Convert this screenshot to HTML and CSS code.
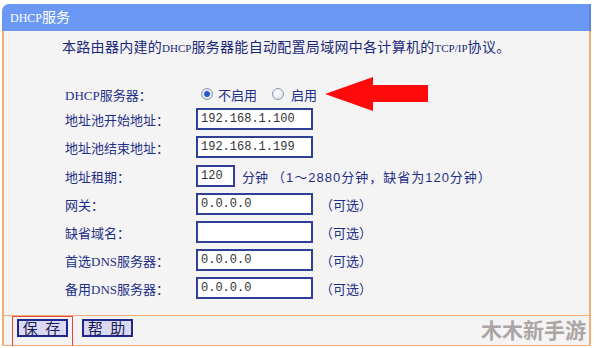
FILE: index.html
```html
<!DOCTYPE html>
<html lang="zh-CN">
<head>
    <meta charset="UTF-8">
    <meta name="viewport" content="width=device-width, initial-scale=1.0">
    <title>DHCP服务</title>
    <link rel="stylesheet" href="styles.css">
</head>
<body>
    <div class="panel">
        <div class="panel-head"><span class="en">DHCP</span>服务</div>

        <div class="panel-body">
            <p class="intro">本路由器内建的<span class="en">DHCP</span>服务器能自动配置局域网中各计算机的<span class="en">TCP/IP</span>协议。</p>

            <div class="form">
                <div class="row row-radio">
                    <span class="label"><span class="en">DHCP</span>服务器：</span>
                    <label class="opt"><input type="radio" name="dhcp" checked>不启用</label>
                    <label class="opt"><input type="radio" name="dhcp">启用</label>
                </div>
                <div class="row">
                    <span class="label">地址池开始地址：</span>
                    <input class="text" type="text" value="192.168.1.100">
                </div>
                <div class="row">
                    <span class="label">地址池结束地址：</span>
                    <input class="text" type="text" value="192.168.1.199">
                </div>
                <div class="row row-lease">
                    <span class="label">地址租期：</span>
                    <input class="text short" type="text" value="120">
                    <span class="unit">分钟</span>
                    <span class="hint">（1～2880分钟，缺省为120分钟）</span>
                </div>
                <div class="row">
                    <span class="label">网关：</span>
                    <input class="text" type="text" value="0.0.0.0">
                    <span class="note">（可选）</span>
                </div>
                <div class="row">
                    <span class="label">缺省域名：</span>
                    <input class="text" type="text" value="">
                    <span class="note">（可选）</span>
                </div>
                <div class="row">
                    <span class="label">首选<span class="en">DNS</span>服务器：</span>
                    <input class="text" type="text" value="0.0.0.0">
                    <span class="note">（可选）</span>
                </div>
                <div class="row">
                    <span class="label">备用<span class="en">DNS</span>服务器：</span>
                    <input class="text" type="text" value="0.0.0.0">
                    <span class="note">（可选）</span>
                </div>
            </div>

            <!-- red pointer at the radio buttons -->
            <svg class="arrow" width="103" height="34" viewBox="0 0 103 34">
                <polygon points="0,17 48,0 48,8 103,8 103,25 48,25 48,34" fill="#ff0a0a"/>
            </svg>
        </div>

        <div class="panel-foot">
            <div class="mark-box"><button class="btn">保 存</button></div>
            <button class="btn">帮 助</button>
            <span class="watermark">木木新手游</span>
        </div>
    </div>
</body>
</html>
```

FILE: styles.css
```css
body {
    margin: 0;
    padding: 0;
    background: #ffffff;
    font-family: "Liberation Serif", "Noto Sans CJK SC", serif;
    color: #1f2f88;
}

.panel {
    margin: 4px 3px 0 2px;
}

.panel-head {
    height: 27px;
    line-height: 27px;
    padding-left: 8px;
    background: #6a98f4;
    border-top-left-radius: 7px;
    border-right: 2px solid #5a86e4;
    color: #ffffff;
    font-size: 14px;
}

.panel-head .en {
    font-size: 12px;
}

.panel-body {
    position: relative;
    height: 284px;
    box-sizing: border-box;
    background: #f4f4f4;
    border-left: 2px solid #f2ae74;
    border-right: 2px solid #f2ae74;
    padding-top: 8px;
}

.intro {
    margin: 0 0 0 58px;
    height: 18px;
    line-height: 18px;
    font-size: 14px;
    letter-spacing: 0.3px;
    color: #1a2878;
}

.intro .en {
    font-size: 11px;
    letter-spacing: 0;
}

.form {
    margin-top: 26px;
    padding-left: 61px;
}

.row {
    display: flex;
    align-items: center;
    height: 28px;
    font-size: 13px;
}

.row-radio {
    height: 22px;
}

.row-lease {
    margin-top: 1px;
}

.label {
    width: 131px;
    flex: none;
}

.opt {
    display: flex;
    align-items: center;
    margin-left: 5px;
}

.opt + .opt {
    margin-left: 15px;
}

.opt input {
    appearance: none;
    width: 12px;
    height: 12px;
    margin: 0 5px 0 0;
    border: 1px solid #8e9bb6;
    border-radius: 50%;
    background: radial-gradient(circle at 40% 40%, #ffffff, #d9dde6);
    box-sizing: border-box;
}

.opt + .opt input {
    margin-right: 7px;
}

.opt input:checked {
    background: radial-gradient(circle, #1f4fbf 0, #2d5fd0 2.5px, #e6e9f0 3.5px, #cfd4df);
}

.text {
    width: 117px;
    height: 22px;
    box-sizing: border-box;
    margin: 0;
    padding: 0 3px;
    border: 2px solid #2f3f95;
    background: #ffffff;
    font-family: "Liberation Mono", monospace;
    font-size: 12px;
    color: #333333;
}

.text.short {
    width: 39px;
}

.unit {
    margin-left: 7px;
}

.hint {
    margin-left: 4px;
    font-family: "Liberation Sans", "Noto Sans CJK SC", sans-serif;
    font-size: 13px;
    letter-spacing: 1px;
}

.note {
    margin-left: 7px;
}

.arrow {
    position: absolute;
    left: 321px;
    top: 46px;
}

.panel-foot {
    display: flex;
    align-items: flex-start;
    height: 29px;
    padding-left: 8px;
    background: #f4f4f4;
    border: 2px solid #f2ae74;
    border-width: 1px 2px;
}

.mark-box {
    padding: 2px 4px 0;
    height: 27px;
    border: 1px solid #e8463c;
}

.btn {
    width: 51px;
    height: 18px;
    padding: 0;
    border: 2px solid #22268c;
    background: #d9d9f4;
    font-family: "Noto Sans CJK SC", sans-serif;
    font-size: 15px;
    line-height: 14px;
    letter-spacing: 2px;
    color: #1a1a52;
    cursor: pointer;
}

.panel-foot > .btn {
    margin: 3px 0 0 9px;
}

.watermark {
    margin-left: auto;
    padding-right: 3px;
    font-family: "Noto Sans CJK SC", sans-serif;
    font-size: 21px;
    font-weight: bold;
    line-height: 27px;
    color: #aca5a5;
}
```
